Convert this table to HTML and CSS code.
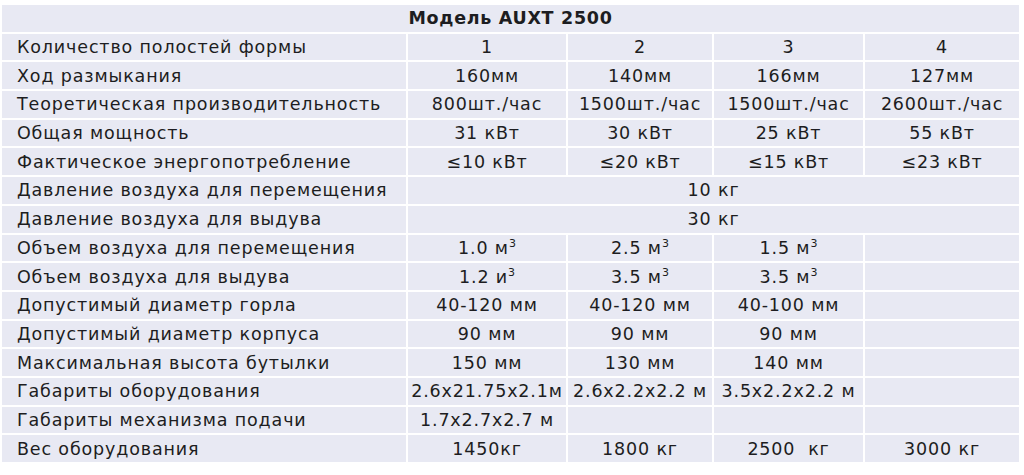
FILE: index.html
```html
<!DOCTYPE html>
<html lang="ru">
<head>
<meta charset="utf-8">
<link rel="stylesheet" href="styles.css">
</head>
<body>
<table class="spec">
  <colgroup>
    <col class="c0"><col class="c1"><col class="c2"><col class="c3"><col class="c4">
  </colgroup>
  <tr><th colspan="5">Модель AUXT 2500</th></tr>
  <tr><td>Количество полостей формы</td><td>1</td><td>2</td><td>3</td><td>4</td></tr>
  <tr><td>Ход размыкания</td><td>160мм</td><td>140мм</td><td>166мм</td><td>127мм</td></tr>
  <tr><td>Теоретическая производительность</td><td>800шт./час</td><td>1500шт./час</td><td>1500шт./час</td><td>2600шт./час</td></tr>
  <tr><td>Общая мощность</td><td>31 кВт</td><td>30 кВт</td><td>25 кВт</td><td>55 кВт</td></tr>
  <tr><td>Фактическое энергопотребление</td><td>≤10 кВт</td><td>≤20 кВт</td><td>≤15 кВт</td><td>≤23 кВт</td></tr>
  <tr><td>Давление воздуха для перемещения</td><td colspan="4">10 кг</td></tr>
  <tr><td>Давление воздуха для выдува</td><td colspan="4">30 кг</td></tr>
  <tr><td>Объем воздуха для перемещения</td><td>1.0 м<sup>3</sup></td><td>2.5 м<sup>3</sup></td><td>1.5 м<sup>3</sup></td><td></td></tr>
  <tr><td>Объем воздуха для выдува</td><td>1.2 и<sup>3</sup></td><td>3.5 м<sup>3</sup></td><td>3.5 м<sup>3</sup></td><td></td></tr>
  <tr><td>Допустимый диаметр горла</td><td>40-120 мм</td><td>40-120 мм</td><td>40-100 мм</td><td></td></tr>
  <tr><td>Допустимый диаметр корпуса</td><td>90 мм</td><td>90 мм</td><td>90 мм</td><td></td></tr>
  <tr><td>Максимальная высота бутылки</td><td>150 мм</td><td>130 мм</td><td>140 мм</td><td></td></tr>
  <tr><td>Габариты оборудования</td><td>2.6x21.75x2.1м</td><td>2.6x2.2x2.2 м</td><td>3.5x2.2x2.2 м</td><td></td></tr>
  <tr><td>Габариты механизма подачи</td><td>1.7x2.7x2.7 м</td><td></td><td></td><td></td></tr>
  <tr><td>Вес оборудования</td><td>1450кг</td><td>1800 кг</td><td>2500&nbsp; кг</td><td>3000 кг</td></tr>
</table>
</body>
</html>
```

FILE: styles.css
```css
html, body {
  margin: 0;
  padding: 0;
  background: #ffffff;
}

body {
  padding-top: 3px;
  font-family: "DejaVu Sans", sans-serif;
  color: #1d1d21;
}

.spec {
  border-collapse: separate;
  border-spacing: 2px;
  table-layout: fixed;
  width: 1019px;
}

.c0 { width: 404px; }
.c1 { width: 158px; }
.c2 { width: 144px; }
.c3 { width: 149px; }
.c4 { width: 154px; }

.spec th,
.spec td {
  background: #e8e9f3;
  height: 26.7px;
  padding: 0;
  font-size: 17.5px;
  line-height: 20px;
  letter-spacing: 0.85px;
  text-align: center;
  vertical-align: middle;
  white-space: nowrap;
  overflow: hidden;
}

.spec th {
  font-weight: bold;
  letter-spacing: 0.7px;
}

.spec td:first-child {
  text-align: left;
  padding-left: 15px;
}

.spec sup {
  font-size: 11px;
  line-height: 0;
  letter-spacing: 0;
  vertical-align: 7px;
}
```
